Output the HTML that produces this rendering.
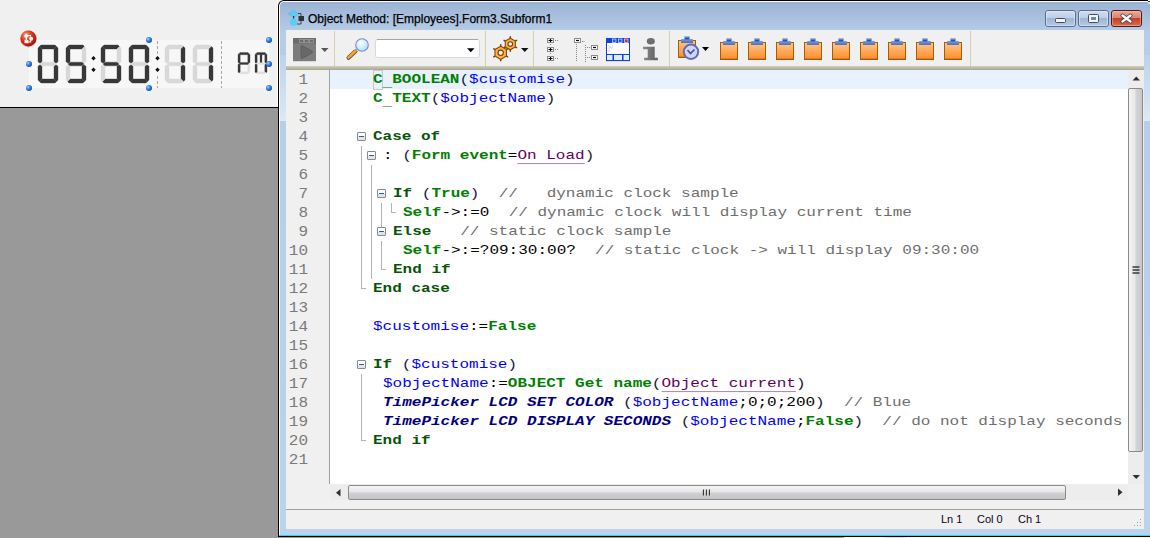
<!DOCTYPE html><html><head><meta charset="utf-8"><style>
*{margin:0;padding:0;box-sizing:border-box}
html,body{width:1150px;height:538px;overflow:hidden;background:#f0f0f0;font-family:"Liberation Sans",sans-serif}
.a{position:absolute}
.l{position:absolute;white-space:pre;font-family:"Liberation Mono",monospace;font-size:16px;line-height:19px;height:19px;color:#000;transform:scaleY(0.82);transform-origin:0 13.77px}
.k{color:#008000;font-weight:bold}
.kd{color:#065506;font-weight:bold}
.v{color:#0000ff}
.p{color:#1a1a40}
.c{color:#6e6e6e}
.cn{color:#5e005e;text-decoration:underline;text-decoration-color:#9a6a9a;text-underline-offset:5px}
.us{position:relative;top:3px}
.tp{color:#000080;font-weight:bold;font-style:italic}
.ln{position:absolute;left:280px;width:28px;text-align:right;font-family:"Liberation Mono",monospace;font-size:16px;line-height:19px;height:19px;color:#7a7a7a;transform:scaleY(0.9);transform-origin:0 13.77px}
</style></head><body>
<div class="a" style="left:0px;top:0px;width:278px;height:107px;background:#f0f0f0"></div>
<div class="a" style="left:277px;top:0px;width:1px;height:107px;background:#fff"></div>
<div class="a" style="left:0px;top:107px;width:278px;height:1px;background:#000"></div>
<div class="a" style="left:0px;top:108px;width:278px;height:430px;background:#999"></div>
<svg class="a" style="left:0;top:0" width="278" height="107" viewBox="0 0 278 107"><defs><radialGradient id="hg" cx="0.35" cy="0.35" r="0.7"><stop offset="0" stop-color="#9fd0ff"/><stop offset="0.5" stop-color="#2f7fe0"/><stop offset="1" stop-color="#0a4fb0"/></radialGradient><radialGradient id="rg" cx="0.35" cy="0.3" r="0.75"><stop offset="0" stop-color="#ff9a70"/><stop offset="0.5" stop-color="#e0301a"/><stop offset="1" stop-color="#9a1008"/></radialGradient></defs><rect x="29" y="40" width="240" height="48" fill="#f7f7f7"/><polygon points="39.50,46.50 41.00,45.00 55.00,45.00 56.50,46.50 54.00,49.00 42.00,49.00" fill="#383838" stroke="#383838" stroke-width="0.35"/><polygon points="58.00,48.00 56.50,46.50 54.00,49.00 54.00,61.80 56.00,63.20 58.00,61.80" fill="#383838" stroke="#383838" stroke-width="0.35"/><polygon points="58.00,66.20 56.00,64.80 54.00,66.20 54.00,79.00 56.50,81.50 58.00,80.00" fill="#383838" stroke="#383838" stroke-width="0.35"/><polygon points="39.50,81.50 42.00,79.00 54.00,79.00 56.50,81.50 55.00,83.00 41.00,83.00" fill="#383838" stroke="#383838" stroke-width="0.35"/><polygon points="38.00,66.20 40.00,64.80 42.00,66.20 42.00,79.00 39.50,81.50 38.00,80.00" fill="#383838" stroke="#383838" stroke-width="0.35"/><polygon points="38.00,48.00 39.50,46.50 42.00,49.00 42.00,61.80 40.00,63.20 38.00,61.80" fill="#383838" stroke="#383838" stroke-width="0.35"/><polygon points="40.00,64.00 42.00,62.20 54.00,62.20 56.00,64.00 54.00,65.80 42.00,65.80" fill="#d8d8d8" stroke="#d8d8d8" stroke-width="0.35"/><polygon points="67.50,46.50 69.00,45.00 83.00,45.00 84.50,46.50 82.00,49.00 70.00,49.00" fill="#383838" stroke="#383838" stroke-width="0.35"/><polygon points="86.00,48.00 84.50,46.50 82.00,49.00 82.00,61.80 84.00,63.20 86.00,61.80" fill="#d8d8d8" stroke="#d8d8d8" stroke-width="0.35"/><polygon points="86.00,66.20 84.00,64.80 82.00,66.20 82.00,79.00 84.50,81.50 86.00,80.00" fill="#383838" stroke="#383838" stroke-width="0.35"/><polygon points="67.50,81.50 70.00,79.00 82.00,79.00 84.50,81.50 83.00,83.00 69.00,83.00" fill="#383838" stroke="#383838" stroke-width="0.35"/><polygon points="66.00,66.20 68.00,64.80 70.00,66.20 70.00,79.00 67.50,81.50 66.00,80.00" fill="#d8d8d8" stroke="#d8d8d8" stroke-width="0.35"/><polygon points="66.00,48.00 67.50,46.50 70.00,49.00 70.00,61.80 68.00,63.20 66.00,61.80" fill="#383838" stroke="#383838" stroke-width="0.35"/><polygon points="68.00,64.00 70.00,62.20 82.00,62.20 84.00,64.00 82.00,65.80 70.00,65.80" fill="#383838" stroke="#383838" stroke-width="0.35"/><polygon points="102.50,46.50 104.00,45.00 118.00,45.00 119.50,46.50 117.00,49.00 105.00,49.00" fill="#383838" stroke="#383838" stroke-width="0.35"/><polygon points="121.00,48.00 119.50,46.50 117.00,49.00 117.00,61.80 119.00,63.20 121.00,61.80" fill="#d8d8d8" stroke="#d8d8d8" stroke-width="0.35"/><polygon points="121.00,66.20 119.00,64.80 117.00,66.20 117.00,79.00 119.50,81.50 121.00,80.00" fill="#383838" stroke="#383838" stroke-width="0.35"/><polygon points="102.50,81.50 105.00,79.00 117.00,79.00 119.50,81.50 118.00,83.00 104.00,83.00" fill="#383838" stroke="#383838" stroke-width="0.35"/><polygon points="101.00,66.20 103.00,64.80 105.00,66.20 105.00,79.00 102.50,81.50 101.00,80.00" fill="#d8d8d8" stroke="#d8d8d8" stroke-width="0.35"/><polygon points="101.00,48.00 102.50,46.50 105.00,49.00 105.00,61.80 103.00,63.20 101.00,61.80" fill="#383838" stroke="#383838" stroke-width="0.35"/><polygon points="103.00,64.00 105.00,62.20 117.00,62.20 119.00,64.00 117.00,65.80 105.00,65.80" fill="#383838" stroke="#383838" stroke-width="0.35"/><polygon points="130.50,46.50 132.00,45.00 146.00,45.00 147.50,46.50 145.00,49.00 133.00,49.00" fill="#383838" stroke="#383838" stroke-width="0.35"/><polygon points="149.00,48.00 147.50,46.50 145.00,49.00 145.00,61.80 147.00,63.20 149.00,61.80" fill="#383838" stroke="#383838" stroke-width="0.35"/><polygon points="149.00,66.20 147.00,64.80 145.00,66.20 145.00,79.00 147.50,81.50 149.00,80.00" fill="#383838" stroke="#383838" stroke-width="0.35"/><polygon points="130.50,81.50 133.00,79.00 145.00,79.00 147.50,81.50 146.00,83.00 132.00,83.00" fill="#383838" stroke="#383838" stroke-width="0.35"/><polygon points="129.00,66.20 131.00,64.80 133.00,66.20 133.00,79.00 130.50,81.50 129.00,80.00" fill="#383838" stroke="#383838" stroke-width="0.35"/><polygon points="129.00,48.00 130.50,46.50 133.00,49.00 133.00,61.80 131.00,63.20 129.00,61.80" fill="#383838" stroke="#383838" stroke-width="0.35"/><polygon points="131.00,64.00 133.00,62.20 145.00,62.20 147.00,64.00 145.00,65.80 133.00,65.80" fill="#d8d8d8" stroke="#d8d8d8" stroke-width="0.35"/><polygon points="166.50,46.50 168.00,45.00 182.00,45.00 183.50,46.50 181.00,49.00 169.00,49.00" fill="#d8d8d8" stroke="#d8d8d8" stroke-width="0.35"/><polygon points="185.00,48.00 183.50,46.50 181.00,49.00 181.00,61.80 183.00,63.20 185.00,61.80" fill="#383838" stroke="#383838" stroke-width="0.35"/><polygon points="185.00,66.20 183.00,64.80 181.00,66.20 181.00,79.00 183.50,81.50 185.00,80.00" fill="#383838" stroke="#383838" stroke-width="0.35"/><polygon points="166.50,81.50 169.00,79.00 181.00,79.00 183.50,81.50 182.00,83.00 168.00,83.00" fill="#d8d8d8" stroke="#d8d8d8" stroke-width="0.35"/><polygon points="165.00,66.20 167.00,64.80 169.00,66.20 169.00,79.00 166.50,81.50 165.00,80.00" fill="#d8d8d8" stroke="#d8d8d8" stroke-width="0.35"/><polygon points="165.00,48.00 166.50,46.50 169.00,49.00 169.00,61.80 167.00,63.20 165.00,61.80" fill="#d8d8d8" stroke="#d8d8d8" stroke-width="0.35"/><polygon points="167.00,64.00 169.00,62.20 181.00,62.20 183.00,64.00 181.00,65.80 169.00,65.80" fill="#d8d8d8" stroke="#d8d8d8" stroke-width="0.35"/><polygon points="194.50,46.50 196.00,45.00 210.00,45.00 211.50,46.50 209.00,49.00 197.00,49.00" fill="#d8d8d8" stroke="#d8d8d8" stroke-width="0.35"/><polygon points="213.00,48.00 211.50,46.50 209.00,49.00 209.00,61.80 211.00,63.20 213.00,61.80" fill="#383838" stroke="#383838" stroke-width="0.35"/><polygon points="213.00,66.20 211.00,64.80 209.00,66.20 209.00,79.00 211.50,81.50 213.00,80.00" fill="#383838" stroke="#383838" stroke-width="0.35"/><polygon points="194.50,81.50 197.00,79.00 209.00,79.00 211.50,81.50 210.00,83.00 196.00,83.00" fill="#d8d8d8" stroke="#d8d8d8" stroke-width="0.35"/><polygon points="193.00,66.20 195.00,64.80 197.00,66.20 197.00,79.00 194.50,81.50 193.00,80.00" fill="#d8d8d8" stroke="#d8d8d8" stroke-width="0.35"/><polygon points="193.00,48.00 194.50,46.50 197.00,49.00 197.00,61.80 195.00,63.20 193.00,61.80" fill="#d8d8d8" stroke="#d8d8d8" stroke-width="0.35"/><polygon points="195.00,64.00 197.00,62.20 209.00,62.20 211.00,64.00 209.00,65.80 197.00,65.80" fill="#d8d8d8" stroke="#d8d8d8" stroke-width="0.35"/><line x1="157.5" y1="41" x2="157.5" y2="88" stroke="#a8a8a8" stroke-width="1" stroke-dasharray="3,2"/><line x1="221.5" y1="41" x2="221.5" y2="88" stroke="#a8a8a8" stroke-width="1" stroke-dasharray="3,2"/><rect x="155" y="54" width="5" height="20" fill="#f7f7f7"/><polygon points="91.3,58.2 93.5,56.0 95.7,58.2 93.5,60.400000000000006" fill="#111"/><polygon points="91.3,69.8 93.5,67.6 95.7,69.8 93.5,72.0" fill="#111"/><polygon points="155.3,58.2 157.5,56.0 159.7,58.2 157.5,60.400000000000006" fill="#111"/><polygon points="155.3,69.8 157.5,67.6 159.7,69.8 157.5,72.0" fill="#111"/><polygon points="239.00,53.50 240.00,52.50 248.00,52.50 249.00,53.50 247.80,54.70 240.20,54.70" fill="#383838" stroke="#383838" stroke-width="0.3"/><polygon points="250.00,54.50 249.00,53.50 247.80,54.70 247.80,62.40 248.90,63.17 250.00,62.40" fill="#383838" stroke="#383838" stroke-width="0.3"/><polygon points="250.00,64.60 248.90,63.83 247.80,64.60 247.80,71.80 249.00,73.00 250.00,72.00" fill="#e0e0e0" stroke="#e0e0e0" stroke-width="0.3"/><polygon points="239.00,73.00 240.20,71.80 247.80,71.80 249.00,73.00 248.00,74.00 240.00,74.00" fill="#e0e0e0" stroke="#e0e0e0" stroke-width="0.3"/><polygon points="238.00,64.60 239.10,63.83 240.20,64.60 240.20,71.80 239.00,73.00 238.00,72.00" fill="#383838" stroke="#383838" stroke-width="0.3"/><polygon points="238.00,54.50 239.00,53.50 240.20,54.70 240.20,62.40 239.10,63.17 238.00,62.40" fill="#383838" stroke="#383838" stroke-width="0.3"/><polygon points="239.19,63.50 240.20,62.51 247.80,62.51 248.81,63.50 247.80,64.49 240.20,64.49" fill="#383838" stroke="#383838" stroke-width="0.3"/><polygon points="256.00,53.50 257.00,52.50 265.00,52.50 266.00,53.50 264.80,54.70 257.20,54.70" fill="#383838" stroke="#383838" stroke-width="0.3"/><polygon points="267.00,54.50 266.00,53.50 264.80,54.70 264.80,62.40 265.90,63.17 267.00,62.40" fill="#383838" stroke="#383838" stroke-width="0.3"/><polygon points="267.00,64.60 265.90,63.83 264.80,64.60 264.80,71.80 266.00,73.00 267.00,72.00" fill="#383838" stroke="#383838" stroke-width="0.3"/><polygon points="256.00,73.00 257.20,71.80 264.80,71.80 266.00,73.00 265.00,74.00 257.00,74.00" fill="#e0e0e0" stroke="#e0e0e0" stroke-width="0.3"/><polygon points="255.00,64.60 256.10,63.83 257.20,64.60 257.20,71.80 256.00,73.00 255.00,72.00" fill="#383838" stroke="#383838" stroke-width="0.3"/><polygon points="255.00,54.50 256.00,53.50 257.20,54.70 257.20,62.40 256.10,63.17 255.00,62.40" fill="#383838" stroke="#383838" stroke-width="0.3"/><polygon points="256.19,63.50 257.20,62.51 264.80,62.51 265.81,63.50 264.80,64.49 257.20,64.49" fill="#e0e0e0" stroke="#e0e0e0" stroke-width="0.3"/><rect x="259.9" y="54.0" width="2.2" height="8.5" fill="#383838"/><circle cx="29" cy="40" r="3" fill="url(#hg)"/><circle cx="29" cy="64" r="3" fill="url(#hg)"/><circle cx="29" cy="88" r="3" fill="url(#hg)"/><circle cx="149" cy="40" r="3" fill="url(#hg)"/><circle cx="149" cy="88" r="3" fill="url(#hg)"/><circle cx="269" cy="40" r="3" fill="url(#hg)"/><circle cx="269" cy="64" r="3" fill="url(#hg)"/><circle cx="269" cy="88" r="3" fill="url(#hg)"/><circle cx="28.5" cy="39" r="8.5" fill="#000" opacity="0.15"/><circle cx="28.4" cy="38.4" r="8" fill="url(#rg)"/><path d="M26.3 33.5 L28.3 35.3 L28.3 37.3 L24.3 37.3 L24.3 35.3 Z" fill="#fff"/><rect x="25.6" y="37" width="1.4" height="3.5" fill="#fff"/><rect x="24.5" y="40.2" width="4" height="3" fill="#fff"/><path d="M28 35.5 H30.5 V36.8 M30.5 40.6 V42 H28.5" stroke="#fff" stroke-width="1.2" fill="none"/><circle cx="31.2" cy="38.7" r="2" fill="#fff"/></svg>
<div class="a" style="left:278px;top:0px;width:878px;height:537px;background:#000;border-radius:6px 0 0 0"></div>
<div class="a" style="left:279px;top:1px;width:877px;height:535px;background:#fff;border-radius:5px 0 0 0"></div>
<div class="a" style="left:280px;top:2px;width:876px;height:533px;background:linear-gradient(#9bb3d3,#b6cde8 30px,#bcd3ec);border-radius:4px 0 0 0"></div>
<div class="a" style="left:280px;top:55px;width:6px;height:66px;background:linear-gradient(#bcd3ec,#d6e5f4 85%,#dce9f6)"></div>
<div class="a" style="left:1144px;top:55px;width:6px;height:66px;background:linear-gradient(#bcd3ec,#d6e5f4 85%,#dce9f6)"></div>
<div class="a" style="left:279px;top:535px;width:871px;height:1px;background:#2ad4f0"></div>
<div class="a" style="left:1148px;top:0px;width:2px;height:1px;background:#fff"></div>
<div class="a" style="left:1148px;top:1px;width:2px;height:1px;background:#1a4a50"></div>
<div class="a" style="left:1148px;top:2px;width:2px;height:2px;background:#b8f0f4"></div>
<div class="a" style="left:278px;top:537px;width:566px;height:1px;background:#9a9a9a"></div>
<div class="a" style="left:844px;top:537px;width:306px;height:1px;background:#f4f4f4"></div>
<div class="a" style="left:884px;top:537px;width:23px;height:1px;background:#d8e0e8"></div>
<div class="a" style="left:308px;top:11px;font-size:12px;line-height:16px;color:#000;white-space:pre;-webkit-text-stroke:0.25px #000">Object Method: [Employees].Form3.Subform1</div>
<svg class="a" style="left:280px;top:0" width="870" height="30">
<defs>
<linearGradient id="bb" x1="0" y1="0" x2="0" y2="1"><stop offset="0" stop-color="#d0def0"/><stop offset="0.47" stop-color="#bccfe8"/><stop offset="0.5" stop-color="#9fb6d4"/><stop offset="1" stop-color="#b4c9e4"/></linearGradient>
<linearGradient id="cb" x1="0" y1="0" x2="0" y2="1"><stop offset="0" stop-color="#eeaa98"/><stop offset="0.47" stop-color="#d98470"/><stop offset="0.5" stop-color="#c0402a"/><stop offset="1" stop-color="#d8704c"/></linearGradient>
</defs>
<polygon points="8.5,14 13.5,10.5 18.5,14 13.5,17.5" fill="#5ccdf5" stroke="#3ab8ea" stroke-width="0.6"/>
<rect x="13" y="16" width="1.2" height="3" fill="#333"/>
<circle cx="13.5" cy="22.3" r="3.7" fill="#5ccdf5"/>
<path d="M18 13.5 H21 V16 M21 21 V24 H17" stroke="#444" stroke-width="1" fill="none"/>
<rect x="18.5" y="16" width="5.5" height="5" fill="#333"/>
<rect x="765.5" y="10.5" width="30" height="16" rx="2.5" fill="url(#bb)" stroke="#5b6b8a"/>
<rect x="766.5" y="11.5" width="28" height="14" rx="1.5" fill="none" stroke="#e6eef8" stroke-opacity="0.6"/>
<rect x="775.5" y="18.5" width="10" height="4" rx="1" fill="#f4f4f4" stroke="#4a4a5a"/>
<rect x="798.5" y="10.5" width="30" height="16" rx="2.5" fill="url(#bb)" stroke="#5b6b8a"/>
<rect x="799.5" y="11.5" width="28" height="14" rx="1.5" fill="none" stroke="#e6eef8" stroke-opacity="0.6"/>
<rect x="808.5" y="14.5" width="10" height="8" rx="1" fill="#f4f4f4" stroke="#4a4a5a"/>
<rect x="811" y="17" width="5" height="3" fill="#6a88b8"/>
<rect x="831.5" y="10.5" width="30" height="16" rx="2.5" fill="url(#cb)" stroke="#5a1414"/>
<rect x="832.5" y="11.5" width="28" height="14" rx="1.5" fill="none" stroke="#f4c8c0" stroke-opacity="0.5"/>
<path d="M842.5 15.5 L850.5 21.5 M850.5 15.5 L842.5 21.5" stroke="#3a3a4a" stroke-width="4" stroke-linecap="round"/>
<path d="M842.5 15.5 L850.5 21.5 M850.5 15.5 L842.5 21.5" stroke="#f8f8f8" stroke-width="2.4" stroke-linecap="round"/>
</svg>
<div class="a" style="left:286px;top:30px;width:858px;height:36px;background:#f0f0f0"></div>
<div class="a" style="left:286px;top:66px;width:858px;height:4px;background:linear-gradient(#d3cfbd,#a9a593)"></div>
<div class="a" style="left:334px;top:31px;width:1px;height:35px;background:#d8cfb0"></div>
<div class="a" style="left:485px;top:31px;width:1px;height:35px;background:#d8cfb0"></div>
<div class="a" style="left:533px;top:31px;width:1px;height:35px;background:#d8cfb0"></div>
<div class="a" style="left:669px;top:31px;width:1px;height:35px;background:#d8cfb0"></div>
<div class="a" style="left:970px;top:31px;width:1px;height:35px;background:#d8cfb0"></div>
<svg class="a" style="left:286px;top:30px" width="858" height="36" viewBox="286 30 858 36"><defs><linearGradient id="og" x1="0" y1="0" x2="0" y2="1"><stop offset="0" stop-color="#ffc888"/><stop offset="1" stop-color="#ff8a2a"/></linearGradient><linearGradient id="blg" x1="0" y1="0" x2="0" y2="1"><stop offset="0" stop-color="#9ac0f0"/><stop offset="1" stop-color="#4a6ec0"/></linearGradient><linearGradient id="ig" x1="0" y1="0" x2="1" y2="0"><stop offset="0" stop-color="#8a8a8a"/><stop offset="1" stop-color="#5e5e5e"/></linearGradient><radialGradient id="lg" cx="0.4" cy="0.35" r="0.7"><stop offset="0" stop-color="#ffffff"/><stop offset="0.6" stop-color="#c4ecfa"/><stop offset="1" stop-color="#a8dcf4"/></radialGradient></defs><rect x="293" y="38" width="23" height="23" fill="#7c7c7c"/><rect x="293" y="38" width="23" height="5.5" fill="#6c6c6c"/><rect x="299.5" y="39.5" width="4" height="3" fill="none" stroke="#9a9a9a" stroke-width="0.8"/><rect x="304.5" y="39.5" width="4" height="3" fill="none" stroke="#9a9a9a" stroke-width="0.8"/><rect x="309.5" y="39.5" width="4" height="3" fill="none" stroke="#9a9a9a" stroke-width="0.8"/><path d="M301 46.5 Q301 45 302.5 45.8 L312 51 Q313 52 312 53 L302.5 58.2 Q301 59 301 57.5 Z" fill="#686868" stroke="#5a5a5a" stroke-width="0.8"/><rect x="293" y="61" width="23" height="1" fill="#d8d8d8"/><polygon points="321,48 328.5,48 324.75,52" fill="#555"/><line x1="348.5" y1="57.8" x2="355.5" y2="51.3" stroke="#6a4a20" stroke-width="4" stroke-linecap="round"/><line x1="348.5" y1="57.5" x2="355.5" y2="51" stroke="#f4a434" stroke-width="2.6" stroke-linecap="round"/><circle cx="362" cy="45" r="6.3" fill="url(#lg)" stroke="#8088cc" stroke-width="1.1"/><rect x="375.5" y="39.5" width="104" height="18" rx="2" fill="#fff" stroke="#d4d8e0"/><line x1="377" y1="39.5" x2="478" y2="39.5" stroke="#a4a6ac"/><polygon points="467,48.3 474.5,48.3 470.75,52.3" fill="#000"/><line x1="510.30" y1="39.20" x2="510.30" y2="36.80" stroke="#7a4008" stroke-width="1.5" stroke-linecap="round"/><line x1="514.46" y1="41.60" x2="516.54" y2="40.40" stroke="#7a4008" stroke-width="1.5" stroke-linecap="round"/><line x1="514.46" y1="46.40" x2="516.54" y2="47.60" stroke="#7a4008" stroke-width="1.5" stroke-linecap="round"/><line x1="510.30" y1="48.80" x2="510.30" y2="51.20" stroke="#7a4008" stroke-width="1.5" stroke-linecap="round"/><line x1="506.14" y1="46.40" x2="504.06" y2="47.60" stroke="#7a4008" stroke-width="1.5" stroke-linecap="round"/><line x1="506.14" y1="41.60" x2="504.06" y2="40.40" stroke="#7a4008" stroke-width="1.5" stroke-linecap="round"/><polygon points="510.30,38.20 515.32,41.10 515.32,46.90 510.30,49.80 505.28,46.90 505.28,41.10" fill="#f9b548" stroke="#8a4a08" stroke-width="1.1" stroke-linejoin="round"/><circle cx="510.3" cy="44.0" r="2.32" fill="#f2eee8" stroke="#7a4008" stroke-width="1.1"/><line x1="500.70" y1="47.20" x2="500.70" y2="44.80" stroke="#7a4008" stroke-width="1.5" stroke-linecap="round"/><line x1="505.55" y1="50.00" x2="507.63" y2="48.80" stroke="#7a4008" stroke-width="1.5" stroke-linecap="round"/><line x1="505.55" y1="55.60" x2="507.63" y2="56.80" stroke="#7a4008" stroke-width="1.5" stroke-linecap="round"/><line x1="500.70" y1="58.40" x2="500.70" y2="60.80" stroke="#7a4008" stroke-width="1.5" stroke-linecap="round"/><line x1="495.85" y1="55.60" x2="493.77" y2="56.80" stroke="#7a4008" stroke-width="1.5" stroke-linecap="round"/><line x1="495.85" y1="50.00" x2="493.77" y2="48.80" stroke="#7a4008" stroke-width="1.5" stroke-linecap="round"/><polygon points="500.70,46.20 506.42,49.50 506.42,56.10 500.70,59.40 494.98,56.10 494.98,49.50" fill="#f9b548" stroke="#8a4a08" stroke-width="1.1" stroke-linejoin="round"/><circle cx="500.7" cy="52.8" r="2.64" fill="#f2eee8" stroke="#7a4008" stroke-width="1.1"/><polygon points="521,48 528.5,48 524.75,52" fill="#111"/><rect x="547.5" y="38.5" width="6" height="4" fill="#fff" stroke="#8a8a8a"/><path d="M548.5 40.5 H552.5 M550.5 39 V42" stroke="#000" stroke-width="1.2"/><rect x="555" y="40" width="1" height="1" fill="#888"/><rect x="557" y="40" width="1" height="1" fill="#888"/><rect x="547.5" y="47.5" width="6" height="4" fill="#fff" stroke="#8a8a8a"/><path d="M548.5 49.5 H552.5 M550.5 48 V51" stroke="#000" stroke-width="1.2"/><rect x="555" y="49" width="1" height="1" fill="#888"/><rect x="557" y="49" width="1" height="1" fill="#888"/><rect x="547.5" y="56.5" width="6" height="4" fill="#fff" stroke="#8a8a8a"/><path d="M548.5 58.5 H552.5 M550.5 57 V60" stroke="#000" stroke-width="1.2"/><rect x="555" y="58" width="1" height="1" fill="#888"/><rect x="557" y="58" width="1" height="1" fill="#888"/><rect x="550" y="44" width="1" height="1" fill="#888"/><rect x="550" y="53" width="1" height="1" fill="#888"/><rect x="574.5" y="38.5" width="6" height="4" fill="#fff" stroke="#8a8a8a"/><path d="M576 40.5 H579" stroke="#000" stroke-width="1.2"/><rect x="591.5" y="45.5" width="6" height="4" fill="#fff" stroke="#8a8a8a"/><path d="M593 47.5 H596" stroke="#000" stroke-width="1.2"/><rect x="591.5" y="55.5" width="6" height="4" fill="#fff" stroke="#8a8a8a"/><path d="M593 57.5 H596" stroke="#000" stroke-width="1.2"/><rect x="576" y="44" width="1" height="1" fill="#888"/><rect x="576" y="46" width="1" height="1" fill="#888"/><rect x="576" y="48" width="1" height="1" fill="#888"/><rect x="576" y="50" width="1" height="1" fill="#888"/><rect x="576" y="52" width="1" height="1" fill="#888"/><rect x="576" y="54" width="1" height="1" fill="#888"/><rect x="576" y="56" width="1" height="1" fill="#888"/><rect x="576" y="58" width="1" height="1" fill="#888"/><rect x="576" y="60" width="1" height="1" fill="#888"/><rect x="585" y="45" width="1" height="1" fill="#888"/><rect x="585" y="47" width="1" height="1" fill="#888"/><rect x="585" y="49" width="1" height="1" fill="#888"/><rect x="585" y="51" width="1" height="1" fill="#888"/><rect x="585" y="53" width="1" height="1" fill="#888"/><rect x="585" y="55" width="1" height="1" fill="#888"/><rect x="585" y="57" width="1" height="1" fill="#888"/><rect x="585" y="59" width="1" height="1" fill="#888"/><rect x="585" y="61" width="1" height="1" fill="#888"/><rect x="582" y="41" width="1" height="1" fill="#888"/><rect x="583.5" y="41" width="1" height="1" fill="#888"/><rect x="587" y="47" width="1" height="1" fill="#888"/><rect x="589" y="47" width="1" height="1" fill="#888"/><rect x="587" y="57" width="1" height="1" fill="#888"/><rect x="589" y="57" width="1" height="1" fill="#888"/><rect x="606" y="38" width="24" height="23" fill="#1040e0"/><rect x="607" y="43" width="22" height="11" fill="#fff"/><rect x="607" y="55" width="5.5" height="5" fill="#dcefff"/><rect x="614" y="55" width="8" height="5" fill="#dcefff"/><rect x="623.5" y="55" width="5.5" height="5" fill="#dcefff"/><rect x="612.5" y="39" width="3.5" height="3.5" fill="#1a5af8" stroke="#fff" stroke-width="0.6"/><rect x="618.5" y="39" width="3.5" height="3.5" fill="#1a5af8" stroke="#fff" stroke-width="0.6"/><rect x="624.5" y="39" width="3.5" height="3.5" fill="#d03030" stroke="#fff" stroke-width="0.6"/><path d="M608 45 L611 48 M609 47 L609 52 M611 49 L613 46" stroke="#c8c8c8" stroke-width="0.8" fill="none"/><rect x="606" y="61" width="24" height="1" fill="#e8dcc0"/><ellipse cx="650.8" cy="41.2" rx="4" ry="3.3" fill="#6e6e6e"/><path d="M643 46.8 H654.7 V57.8 H657.8 V60.2 H644.1 V57.8 H647.7 V49.2 H643 Z" fill="url(#ig)"/><rect x="678.5" y="40.5" width="17" height="17" fill="url(#og)" stroke="#a85c00"/><rect x="678.5" y="56.5" width="17" height="1" fill="#8a4a00" opacity="0.5"/><path d="M681 43 V40 Q681 39 682 39 H684 V37 Q684 36 685 36 H689 Q690 36 690 37 V39 H692 Q693 39 693 40 V43 Z" fill="url(#blg)"/><rect x="685" y="37.5" width="4" height="2" fill="#4848a0"/><circle cx="691" cy="51.8" r="7.2" fill="#ccd8f8" stroke="#6a6ab4" stroke-width="2"/><path d="M687.5 50 L690.5 53.5 L694.5 49.5" stroke="#4a4aa0" stroke-width="1.6" fill="none"/><polygon points="702,47 709,47 705.5,51" fill="#000"/><rect x="720.5" y="42.5" width="17" height="17" fill="url(#og)" stroke="#a85c00"/><rect x="720.5" y="58.5" width="17" height="1" fill="#8a4a00" opacity="0.5"/><path d="M723 45 V42 Q723 41 724 41 H726 V39 Q726 38 727 38 H731 Q732 38 732 39 V41 H734 Q735 41 735 42 V45 Z" fill="url(#blg)"/><rect x="727" y="39.5" width="4" height="2" fill="#4848a0"/><rect x="748.5" y="42.5" width="17" height="17" fill="url(#og)" stroke="#a85c00"/><rect x="748.5" y="58.5" width="17" height="1" fill="#8a4a00" opacity="0.5"/><path d="M751 45 V42 Q751 41 752 41 H754 V39 Q754 38 755 38 H759 Q760 38 760 39 V41 H762 Q763 41 763 42 V45 Z" fill="url(#blg)"/><rect x="755" y="39.5" width="4" height="2" fill="#4848a0"/><rect x="776.5" y="42.5" width="17" height="17" fill="url(#og)" stroke="#a85c00"/><rect x="776.5" y="58.5" width="17" height="1" fill="#8a4a00" opacity="0.5"/><path d="M779 45 V42 Q779 41 780 41 H782 V39 Q782 38 783 38 H787 Q788 38 788 39 V41 H790 Q791 41 791 42 V45 Z" fill="url(#blg)"/><rect x="783" y="39.5" width="4" height="2" fill="#4848a0"/><rect x="804.5" y="42.5" width="17" height="17" fill="url(#og)" stroke="#a85c00"/><rect x="804.5" y="58.5" width="17" height="1" fill="#8a4a00" opacity="0.5"/><path d="M807 45 V42 Q807 41 808 41 H810 V39 Q810 38 811 38 H815 Q816 38 816 39 V41 H818 Q819 41 819 42 V45 Z" fill="url(#blg)"/><rect x="811" y="39.5" width="4" height="2" fill="#4848a0"/><rect x="832.5" y="42.5" width="17" height="17" fill="url(#og)" stroke="#a85c00"/><rect x="832.5" y="58.5" width="17" height="1" fill="#8a4a00" opacity="0.5"/><path d="M835 45 V42 Q835 41 836 41 H838 V39 Q838 38 839 38 H843 Q844 38 844 39 V41 H846 Q847 41 847 42 V45 Z" fill="url(#blg)"/><rect x="839" y="39.5" width="4" height="2" fill="#4848a0"/><rect x="860.5" y="42.5" width="17" height="17" fill="url(#og)" stroke="#a85c00"/><rect x="860.5" y="58.5" width="17" height="1" fill="#8a4a00" opacity="0.5"/><path d="M863 45 V42 Q863 41 864 41 H866 V39 Q866 38 867 38 H871 Q872 38 872 39 V41 H874 Q875 41 875 42 V45 Z" fill="url(#blg)"/><rect x="867" y="39.5" width="4" height="2" fill="#4848a0"/><rect x="888.5" y="42.5" width="17" height="17" fill="url(#og)" stroke="#a85c00"/><rect x="888.5" y="58.5" width="17" height="1" fill="#8a4a00" opacity="0.5"/><path d="M891 45 V42 Q891 41 892 41 H894 V39 Q894 38 895 38 H899 Q900 38 900 39 V41 H902 Q903 41 903 42 V45 Z" fill="url(#blg)"/><rect x="895" y="39.5" width="4" height="2" fill="#4848a0"/><rect x="916.5" y="42.5" width="17" height="17" fill="url(#og)" stroke="#a85c00"/><rect x="916.5" y="58.5" width="17" height="1" fill="#8a4a00" opacity="0.5"/><path d="M919 45 V42 Q919 41 920 41 H922 V39 Q922 38 923 38 H927 Q928 38 928 39 V41 H930 Q931 41 931 42 V45 Z" fill="url(#blg)"/><rect x="923" y="39.5" width="4" height="2" fill="#4848a0"/><rect x="944.5" y="42.5" width="17" height="17" fill="url(#og)" stroke="#a85c00"/><rect x="944.5" y="58.5" width="17" height="1" fill="#8a4a00" opacity="0.5"/><path d="M947 45 V42 Q947 41 948 41 H950 V39 Q950 38 951 38 H955 Q956 38 956 39 V41 H958 Q959 41 959 42 V45 Z" fill="url(#blg)"/><rect x="951" y="39.5" width="4" height="2" fill="#4848a0"/></svg>
<div class="a" style="left:286px;top:70px;width:43px;height:414px;background:#f0f0f0"></div>
<div class="a" style="left:329px;top:70px;width:1px;height:414px;background:#a0a0a0"></div>
<div class="a" style="left:330px;top:70px;width:798px;height:414px;background:#fff"></div>
<div class="a" style="left:330px;top:70px;width:798px;height:19px;background:#e8f2fe"></div>
<div class="a" style="left:373px;top:70px;width:10px;height:20px;border:1px solid #c8c8c8"></div>
<div class="ln" style="top:71px">1</div>
<div class="ln" style="top:90px">2</div>
<div class="ln" style="top:109px">3</div>
<div class="ln" style="top:128px">4</div>
<div class="ln" style="top:147px">5</div>
<div class="ln" style="top:166px">6</div>
<div class="ln" style="top:185px">7</div>
<div class="ln" style="top:204px">8</div>
<div class="ln" style="top:223px">9</div>
<div class="ln" style="top:242px">10</div>
<div class="ln" style="top:261px">11</div>
<div class="ln" style="top:280px">12</div>
<div class="ln" style="top:299px">13</div>
<div class="ln" style="top:318px">14</div>
<div class="ln" style="top:337px">15</div>
<div class="ln" style="top:356px">16</div>
<div class="ln" style="top:375px">17</div>
<div class="ln" style="top:394px">18</div>
<div class="ln" style="top:413px">19</div>
<div class="ln" style="top:432px">20</div>
<div class="ln" style="top:451px">21</div>
<div class="a" style="left:330px;top:70px;width:798px;height:414px;overflow:hidden">
<div class="l" style="left:43px;top:0px"><span class="k">C</span><span class="k us">_</span><span class="k">BOOLEAN</span><span class="p">(</span><span class="v">$customise</span><span class="p">)</span></div>
<div class="l" style="left:43px;top:19px"><span class="k">C</span><span class="k us">_</span><span class="k">TEXT</span><span class="p">(</span><span class="v">$objectName</span><span class="p">)</span></div>
<div class="l" style="left:43px;top:38px"></div>
<div class="l" style="left:43px;top:57px"><span class="kd">Case of</span></div>
<div class="l" style="left:53px;top:76px">: <span class="p">(</span><span class="k">Form event</span>=<span class="cn">On Load</span><span class="p">)</span></div>
<div class="l" style="left:43px;top:95px"></div>
<div class="l" style="left:63px;top:114px"><span class="kd">If</span> <span class="p">(</span><span class="k">True</span><span class="p">)</span><span class="c">  //   dynamic clock sample</span></div>
<div class="l" style="left:73px;top:133px"><span class="k">Self</span>->:=0<span class="c">  // dynamic clock will display current time</span></div>
<div class="l" style="left:63px;top:152px"><span class="kd">Else</span><span class="c">   // static clock sample</span></div>
<div class="l" style="left:73px;top:171px"><span class="k">Self</span>->:=?09:30:00?<span class="c">  // static clock -&gt; will display 09:30:00</span></div>
<div class="l" style="left:63px;top:190px"><span class="kd">End if</span></div>
<div class="l" style="left:43px;top:209px"><span class="kd">End case</span></div>
<div class="l" style="left:43px;top:228px"></div>
<div class="l" style="left:43px;top:247px"><span class="v">$customise</span>:=<span class="k">False</span></div>
<div class="l" style="left:43px;top:266px"></div>
<div class="l" style="left:43px;top:285px"><span class="kd">If</span> <span class="p">(</span><span class="v">$customise</span><span class="p">)</span></div>
<div class="l" style="left:53px;top:304px"><span class="v">$objectName</span>:=<span class="k">OBJECT Get name</span><span class="p">(</span><span class="cn">Object current</span><span class="p">)</span></div>
<div class="l" style="left:53px;top:323px"><span class="tp">TimePicker LCD SET COLOR</span> <span class="p">(</span><span class="v">$objectName</span>;0;0;200<span class="p">)</span><span class="c">  // Blue</span></div>
<div class="l" style="left:53px;top:342px"><span class="tp">TimePicker LCD DISPLAY SECONDS</span> <span class="p">(</span><span class="v">$objectName</span>;<span class="k">False</span><span class="p">)</span><span class="c">  // do not display seconds</span></div>
<div class="l" style="left:43px;top:361px"><span class="kd">End if</span></div>
<div class="l" style="left:43px;top:380px"></div>
</div>
<div class="a" style="left:357px;top:132px;width:9px;height:9px;border:1px solid #8a8a8a;border-radius:1px;background:linear-gradient(#fff 50%,#e4e4e4 50%)"></div>
<div class="a" style="left:359px;top:136px;width:5px;height:1px;background:#2e5f9e"></div>
<div class="a" style="left:367px;top:151px;width:9px;height:9px;border:1px solid #8a8a8a;border-radius:1px;background:linear-gradient(#fff 50%,#e4e4e4 50%)"></div>
<div class="a" style="left:369px;top:155px;width:5px;height:1px;background:#2e5f9e"></div>
<div class="a" style="left:377px;top:189px;width:9px;height:9px;border:1px solid #8a8a8a;border-radius:1px;background:linear-gradient(#fff 50%,#e4e4e4 50%)"></div>
<div class="a" style="left:379px;top:193px;width:5px;height:1px;background:#2e5f9e"></div>
<div class="a" style="left:377px;top:227px;width:9px;height:9px;border:1px solid #8a8a8a;border-radius:1px;background:linear-gradient(#fff 50%,#e4e4e4 50%)"></div>
<div class="a" style="left:379px;top:231px;width:5px;height:1px;background:#2e5f9e"></div>
<div class="a" style="left:357px;top:360px;width:9px;height:9px;border:1px solid #8a8a8a;border-radius:1px;background:linear-gradient(#fff 50%,#e4e4e4 50%)"></div>
<div class="a" style="left:359px;top:364px;width:5px;height:1px;background:#2e5f9e"></div>
<div class="a" style="left:361px;top:146px;width:1px;height:143px;background:#b4b4b4"></div>
<div class="a" style="left:361px;top:288px;width:5px;height:1px;background:#b4b4b4"></div>
<div class="a" style="left:371px;top:165px;width:1px;height:114px;background:#b4b4b4"></div>
<div class="a" style="left:381px;top:203px;width:1px;height:24px;background:#b4b4b4"></div>
<div class="a" style="left:391px;top:203px;width:1px;height:10px;background:#b4b4b4"></div>
<div class="a" style="left:391px;top:212px;width:5px;height:1px;background:#b4b4b4"></div>
<div class="a" style="left:381px;top:241px;width:1px;height:29px;background:#b4b4b4"></div>
<div class="a" style="left:381px;top:269px;width:5px;height:1px;background:#b4b4b4"></div>
<div class="a" style="left:361px;top:374px;width:1px;height:67px;background:#b4b4b4"></div>
<div class="a" style="left:361px;top:440px;width:5px;height:1px;background:#b4b4b4"></div>
<div class="a" style="left:1128px;top:70px;width:16px;height:414px;background:#ededed"></div>
<div class="a" style="left:330px;top:484px;width:798px;height:16px;background:#ededed"></div>
<div class="a" style="left:1128px;top:484px;width:16px;height:16px;background:#f0f0f0"></div>
<div class="a" style="left:286px;top:484px;width:44px;height:25px;background:#f0f0f0"></div>
<div class="a" style="left:286px;top:500px;width:858px;height:9px;background:#f0f0f0"></div>
<div class="a" style="left:286px;top:509px;width:858px;height:1px;background:#a0a0a0"></div>
<div class="a" style="left:286px;top:510px;width:858px;height:19px;background:#f0f0f0"></div>
<div class="a" style="left:1128px;top:88px;width:15px;height:364px;border:1px solid #8a8a8a;border-radius:2px;background:linear-gradient(90deg,#f4f4f4,#e8e8e8 45%,#d4d4d8 55%,#c8c8cc)"></div>
<div class="a" style="left:348px;top:485px;width:718px;height:15px;border:1px solid #8a8a8a;border-radius:2px;background:linear-gradient(#f6f6f6,#e6e6e6 45%,#d0d0d4 55%,#c4c4c8)"></div>
<svg class="a" style="left:0;top:0" width="1150" height="538"><polygon points="340.5,489 340.5,496.5 336,492.75" fill="#303030"/><polygon points="1118,488.5 1118,496 1122.5,492.25" fill="#303030"/><polygon points="1132.5,80.5 1140,80.5 1136.25,76.5" fill="#303030"/><polygon points="1132.5,475 1140,475 1136.25,479" fill="#303030"/><path d="M703.5 489.5 V495.5 M706.5 489.5 V495.5 M709.5 489.5 V495.5" stroke="#3a3a3a" stroke-width="1.3"/><path d="M704.5 489.5 V495.5 M707.5 489.5 V495.5 M710.5 489.5 V495.5" stroke="#fff" stroke-width="0.6" opacity="0.7"/><path d="M1132.5 267 H1139.5 M1132.5 270 H1139.5 M1132.5 273 H1139.5" stroke="#3a3a3a" stroke-width="1.3"/><g fill="#a0a0a0"><rect x="1140" y="519" width="1" height="1"/><rect x="1137" y="522" width="1" height="1"/><rect x="1140" y="522" width="1" height="1"/><rect x="1134" y="525" width="1" height="1"/><rect x="1137" y="525" width="1" height="1"/><rect x="1140" y="525" width="1" height="1"/></g></svg>
<div class="a" style="left:941px;top:512px;font-size:11px;line-height:14px;color:#0a0018;white-space:pre">Ln 1</div>
<div class="a" style="left:977px;top:512px;font-size:11px;line-height:14px;color:#0a0018;white-space:pre">Col 0</div>
<div class="a" style="left:1018px;top:512px;font-size:11px;line-height:14px;color:#0a0018;white-space:pre">Ch 1</div>
</body></html>
